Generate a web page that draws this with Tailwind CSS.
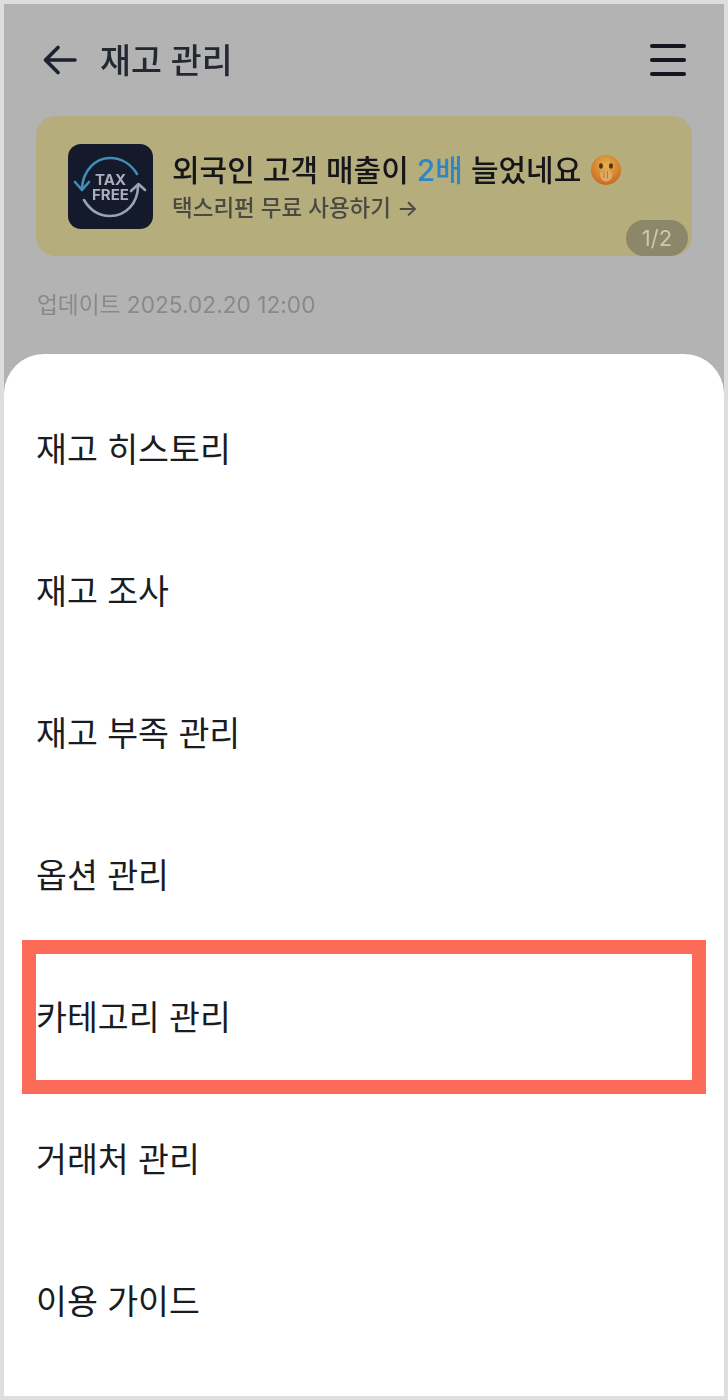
<!DOCTYPE html>
<html lang="ko">
<head>
    <meta charset="UTF-8">
    <meta name="viewport" content="width=device-width, initial-scale=1.0">
    <title>재고 관리</title>
    <script src="https://cdn.jsdelivr.net/npm/@tailwindcss/browser@4"></script>
</head>
<body class="bg-[#dedede] font-['Inter','Noto_Sans_CJK_KR',sans-serif]">
    <div class="relative w-[728px] h-[1400px] border-4 border-[#dedede] bg-[#b3b3b3] overflow-hidden">

        <!-- page behind the sheet -->
        <div class="blur-[0.7px]">
            <header class="h-[112px] flex items-center justify-between pl-[39px] pr-[38px]">
                <div class="flex items-center gap-[23px]">
                    <svg width="34" height="32" viewBox="0 0 34 32" fill="none" stroke="#1b2130" stroke-width="3.6" stroke-linecap="round" stroke-linejoin="round">
                        <path d="M32 16H3"></path>
                        <path d="M15 3.500L2.500 16L15 28.500"></path>
                    </svg>
                    <h1 class="pt-[2px] text-[33.600px] leading-none font-medium text-[#242833]">재고 관리</h1>
                </div>
                <div class="flex flex-col gap-[10px]">
                    <span class="block w-[36px] h-[4px] rounded-full bg-[#14171f]"></span>
                    <span class="block w-[36px] h-[4px] rounded-full bg-[#14171f]"></span>
                    <span class="block w-[36px] h-[4px] rounded-full bg-[#14171f]"></span>
                </div>
            </header>

            <section class="relative mx-[32px] h-[140px] rounded-[20px] bg-[#b5ad7c] flex items-center pl-[32px] gap-[19px] overflow-hidden">
                <svg width="85" height="85" viewBox="0 0 85 85" class="shrink-0" fill="none">
                    <rect width="85" height="85" rx="13" fill="#141a2c"></rect>
                    <path d="M69 30C63 20 53 14 42 14C27 14 15 27 14 44" stroke="#3f8fb5" stroke-width="2.600" stroke-linecap="round"></path>
                    <path d="M7 38L14 46L21 38" stroke="#3f8fb5" stroke-width="2.600" stroke-linecap="round" stroke-linejoin="round"></path>
                    <path d="M16 56C22 66 31 72 42 72C58 72 70 59 70 42" stroke="#9aa3b3" stroke-width="2.600" stroke-linecap="round"></path>
                    <path d="M63 47L70.500 40L77 46" stroke="#9aa3b3" stroke-width="2.600" stroke-linecap="round" stroke-linejoin="round"></path>
                    <text text-anchor="middle" font-size="15" font-weight="700" fill="#a9afba" font-family="Inter"><tspan x="42.500" y="41">TAX</tspan><tspan x="42.500" y="56">FREE</tspan></text>
                </svg>
                <div class="-mt-[1px]">
                    <p class="flex items-center text-[30px] leading-[44px] font-medium text-[#15161a] whitespace-nowrap">
                        <span>외국인 고객 매출이&nbsp;<span class="text-[#2f86c4]">2배</span> 늘었네요</span>
                        <svg width="32" height="32" viewBox="0 0 32 32" class="ml-[9px]">
                            <defs>
                                <radialGradient id="face" cx="50%" cy="35%" r="65%">
                                    <stop offset="0%" stop-color="#e9b44a"></stop>
                                    <stop offset="100%" stop-color="#c9691f"></stop>
                                </radialGradient>
                            </defs>
                            <circle cx="16" cy="16" r="15" fill="url(#face)"></circle>
                            <ellipse cx="11" cy="12" rx="1.900" ry="2.800" fill="#4a3320"></ellipse>
                            <ellipse cx="21" cy="12" rx="1.900" ry="2.800" fill="#4a3320"></ellipse>
                            <path d="M10 20C11 17 13.500 16 16 16C19 16 22 18 22.500 21C22 25 19 27.500 16 27.500C12.500 27.500 10 24 10 20Z" fill="#e0a868"></path>
                            <path d="M14 17.500V24M17.500 17V24.500" stroke="#b8692b" stroke-width="0.800"></path>
                        </svg>
                    </p>
                    <p class="text-[22.500px] leading-[32px] font-medium text-[#4a4a42] whitespace-nowrap">택스리펀 무료 사용하기 →</p>
                </div>
                <span class="absolute right-[4px] bottom-0 w-[62px] h-[36px] rounded-full bg-[#8b8768] flex items-center justify-center text-[22px] text-[#c9c7b5]">1/2</span>
            </section>

            <p class="mt-[33px] pl-[33px] text-[22.700px] leading-[32px] text-[#88898e]">업데이트 2025.02.20 12:00</p>
        </div>

        <!-- bottom sheet -->
        <nav class="absolute left-0 right-0 bottom-0 h-[1042px] rounded-t-[40px] bg-white py-[24px] text-[33.600px] text-[#1a1c22]">
            <div class="h-[142px] flex items-center pl-[32px] pt-[2px]">재고 히스토리</div>
            <div class="h-[142px] flex items-center pl-[32px] pt-[2px]">재고 조사</div>
            <div class="h-[142px] flex items-center pl-[32px] pt-[2px]">재고 부족 관리</div>
            <div class="h-[142px] flex items-center pl-[32px] pt-[2px]">옵션 관리</div>
            <div class="relative h-[142px] flex items-center pl-[32px] pt-[2px]">
                카테고리 관리
                <div class="absolute left-[18px] right-[18px] -top-[6px] -bottom-[6px] border-[14px] border-[#fb6b58]"></div>
            </div>
            <div class="h-[142px] flex items-center pl-[32px] pt-[2px]">거래처 관리</div>
            <div class="h-[142px] flex items-center pl-[32px] pt-[2px]">이용 가이드</div>
        </nav>
    </div>
</body>
</html>
